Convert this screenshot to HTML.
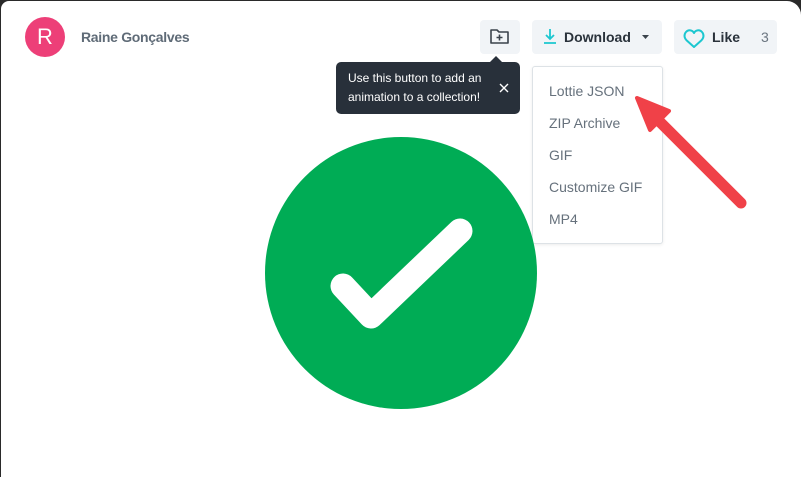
<!DOCTYPE html>
<html><head><style>
html,body{margin:0;padding:0;width:801px;height:477px;overflow:hidden;background:#2a2a2a;font-family:"Liberation Sans",sans-serif}
.panel{position:absolute;left:1px;top:1px;width:800px;height:476px;background:#fff;border-radius:8px 14px 0 0}
.av{position:absolute;left:25px;top:17px;width:40px;height:40px;border-radius:50%;background:#ed3f78;color:#fff;font-size:22px;text-align:center;line-height:40px}
.name{position:absolute;left:81px;top:29px;font-size:14px;color:#5f6b77;font-weight:bold;letter-spacing:-0.3px}
.btn{position:absolute;top:20px;height:34px;background:#f1f4f7;border-radius:4px}
.tip{position:absolute;left:336px;top:62px;width:184px;height:52px;background:#28303a;border-radius:5px;color:#fff;font-size:12px;line-height:19px}
.menu{position:absolute;left:532px;top:66px;width:129px;height:176px;border:1px solid #dde2e6;border-radius:3px;background:#fff;box-shadow:0 1px 3px rgba(0,0,0,.08)}
.menu div{position:absolute;left:16px;font-size:14px;color:#66717c}
</style></head><body>
<div class="panel"></div>
<div class="av">R</div>
<div class="name">Raine Gonçalves</div>
<div class="btn" style="left:480px;width:40px">
<svg width="40" height="34"><path d="M11 10h6l2 2h9v11h-17z" fill="none" stroke="#3b434c" stroke-width="1.6" stroke-linejoin="round"/><path d="M19.5 14.5v6M16.5 17.5h6" stroke="#3b434c" stroke-width="1.6"/></svg></div>
<div class="btn" style="left:532px;width:130px">
<svg width="130" height="34" style="position:absolute;left:0;top:0"><path d="M18 9v10M14 15l4 4 4-4M12 23h12" fill="none" stroke="#1cc7d0" stroke-width="1.8"/><path d="M110 15h7l-3.5 4z" fill="#3b434c"/></svg>
<span style="position:absolute;left:32px;top:9px;font-size:14px;font-weight:bold;color:#2a323b">Download</span></div>
<div class="btn" style="left:674px;width:103px">
<svg width="34" height="34" style="position:absolute;left:0;top:0"><path d="M28 12c-2.5-2.7-6.5-2-8 1-1.5-3-5.5-3.7-8-1-2.3 2.5-1.8 6 .5 8.2L20 27l7.5-6.8c2.3-2.2 2.8-5.7.5-8.2z" fill="none" stroke="#1cc7d0" stroke-width="2" stroke-linejoin="round"/></svg>
<span style="position:absolute;left:38px;top:9px;font-size:14px;font-weight:bold;color:#2a323b">Like</span>
<span style="position:absolute;left:87px;top:9px;font-size:14px;color:#6b7580">3</span></div>
<div class="tip"><svg width="14" height="8" style="position:absolute;left:153px;top:-7px"><path d="M0 8L7 1L14 8z" fill="#28303a"/></svg>
<div style="position:absolute;left:12px;top:7px">Use this button to add an<br>animation to a collection!</div>
<svg width="10" height="10" style="position:absolute;left:163px;top:21px"><path d="M1 1l8 8M9 1l-8 8" stroke="#fff" stroke-width="1.4"/></svg></div>
<div class="menu">
<div style="top:16px">Lottie JSON</div><div style="top:48px">ZIP Archive</div><div style="top:80px">GIF</div><div style="top:112px">Customize GIF</div><div style="top:144px">MP4</div></div>
<svg width="801" height="477" style="position:absolute;left:0;top:0">
<circle cx="401" cy="273" r="136" fill="#00ac55"/>
<path d="M343 286L371 316L460 231" fill="none" stroke="#fff" stroke-width="25" stroke-linecap="round" stroke-linejoin="round"/>
<path d="M741 203L660 122" stroke="#f04148" stroke-width="11" stroke-linecap="round"/>
<path d="M637 98L669 111L650 130z" fill="#f04148" stroke="#f04148" stroke-width="4" stroke-linejoin="round"/>
</svg>
</body></html>
